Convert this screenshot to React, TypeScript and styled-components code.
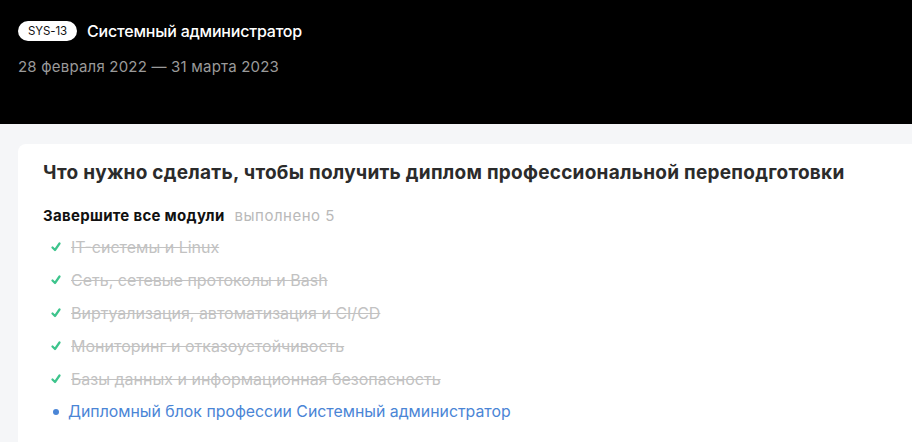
import React from "react";
import styled, { createGlobalStyle } from "styled-components";

const Global = createGlobalStyle`
  html, body { margin: 0; padding: 0; background: #f5f6f8; }
  body { font-family: Inter, "Noto Sans", sans-serif; -webkit-font-smoothing: antialiased; }
`;

const Page = styled.div`
  width: 912px;
  height: 442px;
  overflow: hidden;
  background: #f5f6f8;
`;

const Header = styled.header`
  background: #000;
  height: 124px;
  box-sizing: border-box;
  padding: 21px 18px 0;
  display: flex;
  flex-direction: column;
  gap: 16px;
`;

const TitleRow = styled.div`
  display: flex;
  align-items: center;
  gap: 10px;
`;

const Badge = styled.span`
  background: #fff;
  color: #111;
  border-radius: 10px;
  height: 20px;
  padding: 0 10px;
  display: inline-flex;
  align-items: center;
  font-size: 11.5px;
  letter-spacing: -0.1px;
`;

const Profession = styled.span`
  color: #fff;
  font-size: 16px;
  font-weight: 500;
  letter-spacing: -0.2px;
`;

const Dates = styled.div`
  color: #9a9a9a;
  font-size: 15px;
  letter-spacing: 0.2px;
`;

const Main = styled.main`
  padding: 20px 0 0 18px;
`;

const Card = styled.section`
  background: #fff;
  border-radius: 8px 0 0 8px;
  padding: 17px 0 20px 25px;
  min-height: 320px;
`;

const CardTitle = styled.h2`
  margin: 0 0 22px;
  font-size: 19px;
  font-weight: 700;
  color: #2b2b2b;
  line-height: 24px;
  letter-spacing: 0.26px;
`;

const Subtitle = styled.div`
  display: flex;
  align-items: baseline;
  gap: 10px;
  line-height: 18px;
  margin-bottom: 5px;
`;

const SubTitleText = styled.span`
  font-size: 15px;
  font-weight: 700;
  color: #111;
  letter-spacing: 0.3px;
`;

const Done = styled.span`
  font-size: 15px;
  color: #b9b9b9;
  letter-spacing: 0.5px;
`;

const List = styled.ul`
  list-style: none;
  margin: 0;
  padding: 0;
  display: flex;
  flex-direction: column;
`;

const Item = styled.li<{ $done: boolean }>`
  height: 33px;
  display: flex;
  align-items: center;
  padding-left: 8px;
  gap: ${(p) => (p.$done ? "10px" : "7px")};
  font-size: ${(p) => (p.$done ? "16px" : "15.85px")};
  color: ${(p) => (p.$done ? "#c2c2c2" : "#4a85d6")};
  text-decoration: ${(p) => (p.$done ? "line-through" : "none")};
`;

const Marker = styled.span`
  width: 10px;
  display: inline-flex;
  justify-content: center;
  flex: none;
`;

const Dot = styled.span`
  width: 6px;
  height: 6px;
  border-radius: 50%;
  background: #4a85d6;
`;

const Check = () => (
  <svg width="10" height="10" viewBox="0 0 10 10">
    <path d="M1.5 5.5 L4 8 L8.5 1.5" fill="none" stroke="#3dc48c" strokeWidth="2.2" strokeLinecap="round" strokeLinejoin="round" />
  </svg>
);

const modules = [
  { name: "IT-системы и Linux", done: true },
  { name: "Сеть, сетевые протоколы и Bash", done: true },
  { name: "Виртуализация, автоматизация и CI/CD", done: true },
  { name: "Мониторинг и отказоустойчивость", done: true },
  { name: "Базы данных и информационная безопасность", done: true },
  { name: "Дипломный блок профессии Системный администратор", done: false },
];

export default function App() {
  return (
    <Page>
      <Global />
      <Header>
        <TitleRow>
          <Badge>SYS-13</Badge>
          <Profession>Системный администратор</Profession>
        </TitleRow>
        <Dates>28 февраля 2022 — 31 марта 2023</Dates>
      </Header>
      <Main>
        <Card>
          <CardTitle>Что нужно сделать, чтобы получить диплом профессиональной переподготовки</CardTitle>
          <Subtitle>
            <SubTitleText>Завершите все модули</SubTitleText>
            <Done>выполнено 5</Done>
          </Subtitle>
          <List>
            {modules.map((m) => (
              <Item key={m.name} $done={m.done}>
                <Marker>{m.done ? <Check /> : <Dot />}</Marker>
                <span>{m.name}</span>
              </Item>
            ))}
          </List>
        </Card>
      </Main>
    </Page>
  );
}
